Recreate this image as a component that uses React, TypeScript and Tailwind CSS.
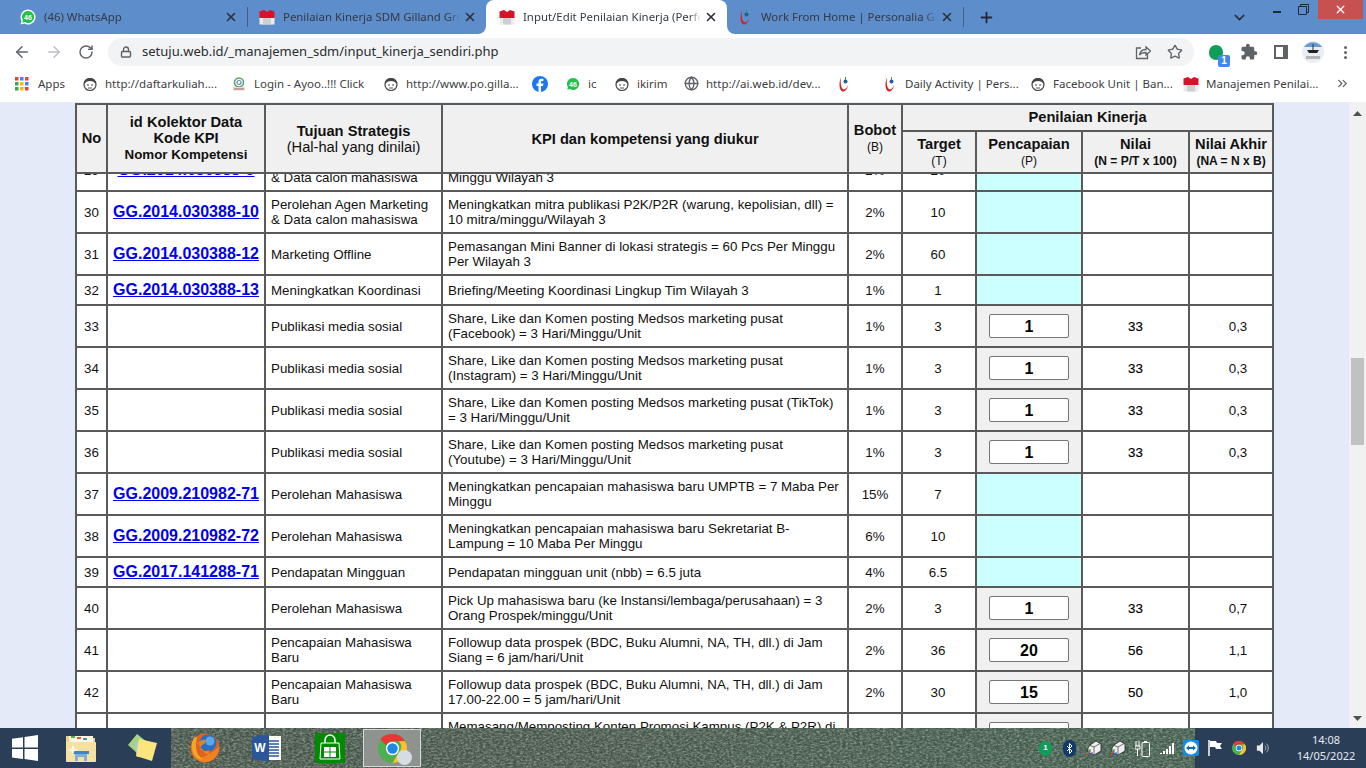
import React from "react";
import { ArrowLeft, ArrowRight, RotateCw, Lock, Star, X, Plus, ChevronDown, ChevronsRight, Globe } from "lucide-react";
import { MdExtension } from "react-icons/md";

const Flag = () => (
  <svg width="16" height="16" viewBox="0 0 16 16" className="shrink-0">
    <rect x="0.500" y="8" width="15" height="7.500" fill="#ececec" />
    <rect x="4" y="9" width="8" height="6.500" fill="#cfcfcf" />
    <path d="M0.500 2.500L5 1l3 2 3-2 4.500 1.500V9H0.500z" fill="#d8122a" />
  </svg>
);
const Wa = ({ s = 16 }: { s?: number }) => (
  <svg width={s} height={s} viewBox="0 0 16 16" className="shrink-0">
    <path d="M8 .500a7.500 7.500 0 0 0-6.400 11.300L.500 15.500l3.800-1A7.500 7.500 0 1 0 8 .500z" fill="#fff" />
    <path d="M8 2a6 6 0 0 0-5.100 9.200l-.6 2.500 2.500-.7A6 6 0 1 0 8 2z" fill="#25c04a" />
    <text x="8" y="10.500" textAnchor="middle" fontSize="7" fontWeight="700" fill="#fff" fontFamily="Liberation Sans, sans-serif">46</text>
  </svg>
);
const Swoosh = () => (
  <svg width="16" height="16" viewBox="0 0 16 16" className="shrink-0">
    <path d="M5 1.500C2.500 7 3 14 6.500 15.500c3 .5 5-3 5.500-6.500-1 3-3 4.800-4.500 4.300C5 12 4.200 7 5 1.500z" fill="#d2232a" />
    <circle cx="9.500" cy="5.500" r="2" fill="#1d5c96" />
    <path d="M9.500 1v3" stroke="#3a9a44" strokeWidth="1" />
  </svg>
);
const Face = () => (
  <svg width="16" height="16" viewBox="0 0 16 16" className="shrink-0">
    <circle cx="8" cy="8.500" r="6" fill="#fff" stroke="#444" strokeWidth="1.200" />
    <path d="M2 8c0-4 3-6 6-6s6 2 6 6c-2-2-3-3-6-3S4 6 2 8z" fill="#444" />
    <circle cx="6" cy="9" r=".8" fill="#333" />
    <circle cx="10" cy="9" r=".8" fill="#333" />
    <path d="M6 12h4" stroke="#555" />
  </svg>
);
const Fb = () => (
  <svg width="16" height="16" viewBox="0 0 16 16" className="shrink-0">
    <circle cx="8" cy="8" r="8" fill="#1877f2" />
    <path d="M9 16v-6h2l.4-2.400H9V6.200c0-.8.4-1.200 1.200-1.200h1.200V3s-1-.2-2-.2C7.500 2.800 6.500 4 6.500 6v1.600H4.500V10h2v6z" fill="#fff" />
  </svg>
);
const Login = () => (
  <svg width="16" height="16" viewBox="0 0 16 16" className="shrink-0">
    <circle cx="8" cy="6.500" r="4.500" fill="none" stroke="#5aa05a" strokeWidth="1.500" />
    <circle cx="8" cy="6.500" r="2" fill="none" stroke="#5a8fd0" strokeWidth="1.200" />
    <rect x="2" y="11" width="12" height="3.500" fill="#d8e4d8" />
    <path d="M3 13h10" stroke="#c05050" strokeWidth="1" />
  </svg>
);
const Grid = () => (
  <svg width="14" height="14" viewBox="0 0 14 14" className="shrink-0">
    {[0, 5, 10].flatMap((y, j) =>
      [0, 5, 10].map((x, i) => (
        <rect key={`${i}${j}`} x={x} y={y} width="3.500" height="3.500" fill={["#ea4335", "#4285f4", "#ea4335", "#34a853", "#fbbc05", "#4285f4", "#34a853", "#fbbc05", "#ea4335"][j * 3 + i]} />
      ))
    )}
  </svg>
);

const Tab = ({ icon, title, cls, active }: { icon: React.ReactNode; title: string; cls: string; active?: boolean }) => (
  <div className={`relative flex h-[34px] shrink-0 items-center gap-[8px] pr-[9px] ${cls} ${active ? "rounded-t-[8px] bg-white" : ""}`}>
    {active && (
      <>
        <svg width="8" height="8" viewBox="0 0 8 8" className="absolute bottom-0 left-[-8px]"><path d="M8 0v8H0a8 8 0 0 0 8-8z" fill="#fff" /></svg>
        <svg width="8" height="8" viewBox="0 0 8 8" className="absolute bottom-0 right-[-8px]"><path d="M0 0v8h8a8 8 0 0 1-8-8z" fill="#fff" /></svg>
      </>
    )}
    {icon}
    <span className="-mr-[5px] min-w-0 flex-1 overflow-hidden whitespace-nowrap text-[11.400px] text-[#333a44] [font-family:'Noto_Sans',sans-serif] [mask-image:linear-gradient(to_left,transparent,black_12px)]">{title}</span>
    <X size={14} strokeWidth={2.600} className="shrink-0 text-[#2b2f36]" />
  </div>
);

const Bm = ({ icon, label, w }: { icon: React.ReactNode; label?: string; w: string }) => (
  <div className={`flex shrink-0 items-center gap-[7px] ${w}`}>
    {icon}
    {label && <span className="whitespace-nowrap text-[11.500px] text-[#3c4043] [font-family:'Noto_Sans',sans-serif]">{label}</span>}
  </div>
);

type Row = { no: number; id?: string; t1: string; t2?: string; k1: string; k2?: string; b: string; tg: string; p?: string; n?: string; na?: string; h: string };
const rows: Row[] = [
  { no: 29, id: "GG.2014.030388-9", t1: "Perolehan Agen Marketing", t2: "& Data calon mahasiswa", k1: "Meningkatkan mitra publikasi mahasiswa = 20 mitra per", k2: "Minggu Wilayah 3", b: "2%", tg: "20", h: "h-[42px]" },
  { no: 30, id: "GG.2014.030388-10", t1: "Perolehan Agen Marketing", t2: "& Data calon mahasiswa", k1: "Meningkatkan mitra publikasi P2K/P2R (warung, kepolisian, dll) =", k2: "10 mitra/minggu/Wilayah 3", b: "2%", tg: "10", h: "h-[42px]" },
  { no: 31, id: "GG.2014.030388-12", t1: "Marketing Offline", k1: "Pemasangan Mini Banner di lokasi strategis = 60 Pcs Per Minggu", k2: "Per Wilayah 3", b: "2%", tg: "60", h: "h-[42px]" },
  { no: 32, id: "GG.2014.030388-13", t1: "Meningkatkan Koordinasi", k1: "Briefing/Meeting Koordinasi Lingkup Tim Wilayah 3", b: "1%", tg: "1", h: "h-[30px]" },
  { no: 33, t1: "Publikasi media sosial", k1: "Share, Like dan Komen posting Medsos marketing pusat", k2: "(Facebook) = 3 Hari/Minggu/Unit", b: "1%", tg: "3", p: "1", n: "33", na: "0,3", h: "h-[42px]" },
  { no: 34, t1: "Publikasi media sosial", k1: "Share, Like dan Komen posting Medsos marketing pusat", k2: "(Instagram) = 3 Hari/Minggu/Unit", b: "1%", tg: "3", p: "1", n: "33", na: "0,3", h: "h-[42px]" },
  { no: 35, t1: "Publikasi media sosial", k1: "Share, Like dan Komen posting Medsos marketing pusat (TikTok)", k2: "= 3 Hari/Minggu/Unit", b: "1%", tg: "3", p: "1", n: "33", na: "0,3", h: "h-[42px]" },
  { no: 36, t1: "Publikasi media sosial", k1: "Share, Like dan Komen posting Medsos marketing pusat", k2: "(Youtube) = 3 Hari/Minggu/Unit", b: "1%", tg: "3", p: "1", n: "33", na: "0,3", h: "h-[42px]" },
  { no: 37, id: "GG.2009.210982-71", t1: "Perolehan Mahasiswa", k1: "Meningkatkan pencapaian mahasiswa baru UMPTB = 7 Maba Per", k2: "Minggu", b: "15%", tg: "7", h: "h-[42px]" },
  { no: 38, id: "GG.2009.210982-72", t1: "Perolehan Mahasiswa", k1: "Meningkatkan pencapaian mahasiswa baru Sekretariat B-", k2: "Lampung = 10 Maba Per Minggu", b: "6%", tg: "10", h: "h-[42px]" },
  { no: 39, id: "GG.2017.141288-71", t1: "Pendapatan Mingguan", k1: "Pendapatan mingguan unit (nbb) = 6.5 juta", b: "4%", tg: "6.5", h: "h-[30px]" },
  { no: 40, t1: "Perolehan Mahasiswa", k1: "Pick Up mahasiswa baru (ke Instansi/lembaga/perusahaan) = 3", k2: "Orang Prospek/minggu/Unit", b: "2%", tg: "3", p: "1", n: "33", na: "0,7", h: "h-[42px]" },
  { no: 41, t1: "Pencapaian Mahasiswa", t2: "Baru", k1: "Followup data prospek (BDC, Buku Alumni, NA, TH, dll.) di Jam", k2: "Siang = 6 jam/hari/Unit", b: "2%", tg: "36", p: "20", n: "56", na: "1,1", h: "h-[42px]" },
  { no: 42, t1: "Pencapaian Mahasiswa", t2: "Baru", k1: "Followup data prospek (BDC, Buku Alumni, NA, TH, dll.) di Jam", k2: "17.00-22.00 = 5 jam/hari/Unit", b: "2%", tg: "30", p: "15", n: "50", na: "1,0", h: "h-[42px]" },
  { no: 43, t1: "Publikasi media sosial", k1: "Memasang/Memposting Konten Promosi Kampus (P2K & P2R) di", k2: "Media Sosial = 3 Konten/hari", b: "2%", tg: "21", p: "8", n: "38", na: "0,8", h: "h-[42px]" },
];

const bd = "border-2 border-[#5a5a5a]";
const Cols = () => (
  <colgroup>
    <col className="w-[31px]" />
    <col className="w-[158px]" />
    <col className="w-[177px]" />
    <col className="w-[406px]" />
    <col className="w-[54px]" />
    <col className="w-[74px]" />
    <col className="w-[106px]" />
    <col className="w-[107px]" />
    <col className="w-[84px]" />
  </colgroup>
);
const th = `${bd} bg-[#f0f0f0] p-0 text-center align-middle font-bold text-[14.670px] leading-[16px] text-[#111]`;

const Header = () => (
  <table className="w-[1198px] shrink-0 table-fixed border-collapse [font-family:'Liberation_Sans',sans-serif]">
    <Cols />
    <thead>
      <tr className="h-[27px]">
        <th rowSpan={2} className={`${th} pb-[2px]`}>No</th>
        <th rowSpan={2} className={th}>
          id Kolektor Data<br />Kode KPI<br /><span className="text-[13.330px]">Nomor Kompetensi</span>
        </th>
        <th rowSpan={2} className={th}>
          Tujuan Strategis<br /><span className="font-normal">(Hal-hal yang dinilai)</span>
        </th>
        <th rowSpan={2} className={th}>KPI dan kompetensi yang diukur</th>
        <th rowSpan={2} className={th}>
          Bobot<br /><span className="text-[12px] font-normal">(B)</span>
        </th>
        <th colSpan={4} className={`${th} pb-[2px]`}>Penilaian Kinerja</th>
      </tr>
      <tr className="h-[42px]">
        <th className={th}>Target<br /><span className="text-[12px] font-normal">(T)</span></th>
        <th className={th}>Pencapaian<br /><span className="text-[12px] font-normal">(P)</span></th>
        <th className={th}>Nilai<br /><span className="text-[12px]">(N = P/T x 100)</span></th>
        <th className={th}>Nilai Akhir<br /><span className="text-[12px]">(NA = N x B)</span></th>
      </tr>
    </thead>
  </table>
);

const Body = () => (
  <div className="min-h-0 flex-1 overflow-hidden">
    <table className="-mt-[26px] w-[1198px] table-fixed border-collapse bg-white text-[13.330px] leading-[15px] text-[#111] [font-family:'Liberation_Sans',sans-serif]">
      <Cols />
      <tbody>
        {rows.map((r) => (
          <tr key={r.no} className={r.h}>
            <td className={`${bd} p-0 text-center`}>{r.no}</td>
            <td className={`${bd} p-0 text-center`}>
              {r.id && <a className="text-[16px] font-bold text-[#0000ee] underline">{r.id}</a>}
            </td>
            <td className={`${bd} py-0 pl-[5px] pr-0`}>{r.t1}{r.t2 && <><br />{r.t2}</>}</td>
            <td className={`${bd} py-0 pl-[5px] pr-0`}>{r.k1}{r.k2 && <><br />{r.k2}</>}</td>
            <td className={`${bd} p-0 text-center`}>{r.b}</td>
            <td className={`${bd} p-0 pr-[2px] text-center`}>{r.tg}</td>
            <td className={`${bd} p-0 ${r.p ? "bg-[#f0f0f0]" : "bg-[#ccffff]"}`}>
              {r.p && (
                <div className="mx-auto flex h-[24px] w-[80px] items-center justify-center rounded-[2px] border border-[#767676] bg-white text-[16px] font-bold text-black">{r.p}</div>
              )}
            </td>
            <td className={`${bd} p-0 text-center text-black [-webkit-text-stroke:0.15px_black]`}>{r.n}</td>
            <td className={`${bd} p-0 pl-[14px] text-center`}>{r.na}</td>
          </tr>
        ))}
      </tbody>
    </table>
  </div>
);

const Grass = () => (
  <svg className="absolute inset-0 h-full w-full" preserveAspectRatio="none">
    <defs>
      <filter id="grassD" x="0" y="0" width="100%" height="100%">
        <feTurbulence type="fractalNoise" baseFrequency="0.3 0.5" numOctaves="3" seed="4" />
        <feColorMatrix values="0 0 0 0 0.14  0 0 0 0 0.2  0 0 0 0 0.16  2.200 0 0 0 -0.800" />
      </filter>
      <filter id="grassL" x="0" y="0" width="100%" height="100%">
        <feTurbulence type="fractalNoise" baseFrequency="0.35 0.6" numOctaves="2" seed="11" />
        <feColorMatrix values="0 0 0 0 0.45  0 0 0 0 0.52  0 0 0 0 0.46  0 1.400 0 0 -0.620" />
      </filter>
      <linearGradient id="grassBase" x1="0" x2="1" y1="0" y2="0">
        <stop offset="0" stopColor="#434e45" />
        <stop offset="0.45" stopColor="#465248" />
        <stop offset="0.8" stopColor="#3f5a49" />
        <stop offset="1" stopColor="#3f5a49" />
      </linearGradient>
    </defs>
    <rect width="100%" height="100%" fill="url(#grassBase)" />
    <rect width="100%" height="100%" filter="url(#grassD)" />
    <rect width="100%" height="100%" filter="url(#grassL)" />
  </svg>
);

const Win = () => (
  <svg width="26" height="26" viewBox="0 0 26 26">
    <path d="M0 3.800l11-1.600V12.500H0zM12.500 2L26 0v12.500H12.500zM0 14h11v10L0 22.400zM12.500 14H26v12l-13.500-2z" fill="#fff" />
  </svg>
);
const Folder = () => (
  <svg width="32" height="30" viewBox="0 0 32 30">
    <path d="M1 3h10l2 2h17v10H1z" fill="#e9d28c" />
    <rect x="4" y="3" width="24" height="8" fill="#fbf6dc" />
    <rect x="6" y="3" width="4" height="2" fill="#4caf50" />
    <rect x="12" y="4" width="4" height="2" fill="#d9534f" />
    <rect x="18" y="5" width="4" height="2" fill="#3f8fd6" />
    <rect x="1" y="9" width="30" height="20" rx="1" fill="#f5e1a0" />
    <path d="M10 28v-7h12v7h-3v-4h-6v4z" fill="#7fb0dc" />
    <rect x="8" y="18" width="16" height="3" fill="#3f86c4" />
    <path d="M8 11l1.500 5 4 1-4 1-1.500 4-1.500-4-4-1 4-1z" fill="#ffffff" fillOpacity=".8" />
  </svg>
);
const Notes = () => (
  <svg width="32" height="30" viewBox="0 0 32 30">
    <path d="M1 12L10 1l10 8-10 11z" fill="#a4d484" />
    <path d="M8 10h12v14H10z" fill="#a9c8ea" />
    <path d="M12 6l18 4-5 18-16-5z" fill="#fbe57d" />
  </svg>
);
const Fox = () => (
  <svg width="30" height="30" viewBox="0 0 30 30">
    <circle cx="15" cy="15" r="14.500" fill="#e2611c" />
    <circle cx="18" cy="10" r="8.500" fill="#2a6fbf" />
    <circle cx="20" cy="8" r="4.500" fill="#5fa7e4" />
    <path d="M29 13c.6 8-5.500 16-14 16C9 29 3 25 1.500 18 3 22 8 25 13 24c6-1 6-6 6-7-2 1.500-6 1.500-8 0-1.500-2 0-5 3-6 1-.5 2-2 1.500-4C12 6 9 8 8 11 6.500 10 6 7 7 4 3 7 4 5 5 3c3 8 7 15 11 18 4 0 10-3 13-8z" fill="#f08a24" fillOpacity=".85" />
    <path d="M3 7c-2 4-2 9 0 13 2 3 5 6 10 7-5-4-7-9-7-14 0-3 0-6 1-9-2 0-3 1-4 3z" fill="#f6c02c" fillOpacity=".75" />
  </svg>
);
const Word = () => (
  <svg width="30" height="30" viewBox="0 0 30 30">
    <rect x="13" y="3" width="16" height="24" fill="#fff" />
    <path d="M17 8h10M17 11h10M17 14h10M17 17h10M17 20h10M17 23h10" stroke="#2b579a" strokeWidth="1.500" />
    <path d="M0 4l17-3v28L0 26z" fill="#2b579a" />
    <text x="8" y="19" textAnchor="middle" fontSize="12" fontWeight="700" fill="#fff" fontFamily="Liberation Sans, sans-serif">W</text>
  </svg>
);
const Store = () => (
  <svg width="30" height="30" viewBox="0 0 30 30">
    <rect width="30" height="30" fill="#008a00" />
    <path d="M10 10V7a5 5 0 0 1 10 0v3" fill="none" stroke="#fff" strokeWidth="1.500" />
    <path d="M6 10h18l1 16H5z" fill="none" stroke="#fff" strokeWidth="1" />
    <path d="M9 14h5.500v4.500H9zM15.500 14H21v4.500h-5.500zM9 19.500h5.500V24H9zM15.500 19.500H21V24h-5.500z" fill="#fff" />
  </svg>
);
const ChromeIcon = ({ s = 24 }: { s?: number }) => (
  <svg width={s} height={s} viewBox="0 0 24 24" className="shrink-0">
    <circle cx="12" cy="12" r="12" fill="#4caf50" />
    <path d="M12 0a12 12 0 0 1 10.400 6H12a6 6 0 0 0-5.400 3.300L2 4.300A12 12 0 0 1 12 0z" fill="#e53935" />
    <path d="M22.400 6A12 12 0 0 1 12 24l5.200-9a6 6 0 0 0 0-9z" fill="#fbc02d" />
    <circle cx="12" cy="12" r="5.500" fill="#fff" />
    <circle cx="12" cy="12" r="4.300" fill="#1e88e5" />
  </svg>
);

const Printer = () => (
  <svg width="16" height="17" viewBox="0 0 16 17" className="shrink-0">
    <path d="M4 5l6-4 5 3v7l-7 4-6-3V8z" fill="#eeeeee" stroke="#222" strokeWidth=".8" />
    <path d="M8 7l6-3.500M8 7v7M8 7L3 5" stroke="#333" strokeWidth=".7" fill="none" />
    <path d="M0 15l4-5 1 1-4 5z" fill="#e33" />
    <path d="M2 16l4-4 1 1-4 3z" fill="#2b5be8" />
    <path d="M1 13l3-4 1 .5-3 4z" fill="#2da84a" />
  </svg>
);

const Taskbar = () => (
  <div className="relative flex h-[40px] shrink-0 items-stretch overflow-hidden">
    <Grass />
    <div className="relative flex w-[171px] shrink-0 items-center bg-[#2a3e58]">
      <div className="ml-[12px] flex"><Win /></div>
      <div className="ml-[27px] flex"><Folder /></div>
      <div className="ml-[30px] flex"><Notes /></div>
    </div>
    <div className="relative flex items-center">
      <div className="ml-[19px] flex"><Fox /></div>
      <div className="ml-[32px] flex"><Word /></div>
      <div className="ml-[33px] flex"><Store /></div>
      <div className="ml-[18px] flex h-[38px] w-[58px] items-center justify-center border border-[#d8d8d8] bg-[#8f938f]">
        <div className="relative flex"><ChromeIcon s={29} />
          <span className="absolute bottom-[-2px] right-[-5px] h-[15px] w-[15px] rounded-full bg-[#d5dde2]" />
        </div>
      </div>
    </div>
    <div className="relative z-10 ml-auto mr-[-4px] flex items-center">
      <div className="flex h-[15px] w-[13px] items-center justify-center rounded-full bg-[#0f9d58] text-[8px] font-bold text-white [font-family:'Liberation_Sans',sans-serif]">1</div>
      <div className="ml-[11px] flex h-[17px] w-[13px] items-center justify-center rounded-full bg-[#123a6b]">
        <svg width="7" height="11" viewBox="0 0 7 11"><path d="M1 3l5 5-2.500 2.500V.500L6 3 1 8" fill="none" stroke="#fff" strokeWidth="1" /></svg>
      </div>
      <div className="ml-[10px] flex"><Printer /></div>
      <div className="ml-[8px] flex"><Printer /></div>
      <svg width="15" height="17" viewBox="0 0 15 17" className="ml-[9px] shrink-0"><rect x="7" y="2.500" width="7.500" height="14" rx="1" fill="none" stroke="#fff" /><rect x="9" y="1" width="3" height="1.500" fill="#fff" /><path d="M1 1v5M4 1v5M0 6h5v3H0zM2.500 9v7" stroke="#fff" strokeWidth="1" fill="none" /></svg>
      <svg width="16" height="13" viewBox="0 0 16 13" className="ml-[9px] shrink-0"><path d="M1 11h2v1H1zM4 9h2v3H4zM7 7h2v5H7zM10 4h2v8h-2zM13 1h2v11h-2z" fill="#fff" /></svg>
      <div className="ml-[8px] flex h-[16px] w-[16px] items-center justify-center rounded-[2px] bg-[#0e8ee9]">
        <svg width="14" height="14" viewBox="0 0 14 14"><circle cx="7" cy="7" r="6.500" fill="#fff" /><path d="M2 7l3-2.500v1.500h4V4.500L12 7 9 9.500V8H5v1.500z" fill="#0e6cc0" /></svg>
      </div>
    </div>
    <div className="relative flex w-[171px] shrink-0 items-center bg-[#2a3e58] pl-[13px]">
      <svg width="14" height="16" viewBox="0 0 14 16" className="shrink-0"><path d="M1 0v16" stroke="#fff" strokeWidth="1.500" /><path d="M2 1h6l1 2h5l-2 3 2 3H8L7 7H2z" fill="#fff" /></svg>
      <div className="ml-[10px] flex"><ChromeIcon s={14} /></div>
      <svg width="14" height="16" viewBox="0 0 16 16" className="ml-[10px] shrink-0"><path d="M1 5h3l4-4v14l-4-4H1z" fill="#e8e8e8" /><path d="M10 5a4 4 0 0 1 0 6M12 3a7 7 0 0 1 0 10" fill="none" stroke="#bbb" /></svg>
      <div className="ml-[21px] flex w-[70px] flex-col items-center text-[11px] leading-[16px] text-[#e6e9ee] [font-family:'Noto_Sans',sans-serif]">
        <span>14:08</span>
        <span>14/05/2022</span>
      </div>
    </div>
  </div>
);

export default function App() {
  return (
    <div className="flex h-[768px] w-[1366px] flex-col overflow-hidden bg-white">
      {/* tabs */}
      <div className="flex h-[34px] shrink-0 items-center bg-[#5e8dcb]">
        <Tab cls="ml-[8px] w-[239px] pl-[12px]" icon={<Wa />} title="(46) WhatsApp" />
        <div className="h-[20px] w-px shrink-0 bg-[#3f5f8a]" />
        <Tab cls="w-[238px] pl-[11px]" icon={<Flag />} title="Penilaian Kinerja SDM Gilland Gro" />
        <Tab cls="w-[241px] pl-[13px]" active icon={<Flag />} title="Input/Edit Penilaian Kinerja (Perfo" />
        <Tab cls="w-[236px] pl-[10px]" icon={<Swoosh />} title="Work From Home | Personalia Gil" />
        <div className="h-[20px] w-px shrink-0 bg-[#3f5f8a]" />
        <Plus size={17} strokeWidth={2.500} className="ml-[14px] shrink-0 text-[#1f2937]" />
        <ChevronDown size={17} strokeWidth={2.200} className="ml-[236px] shrink-0 text-[#26303f]" />
        <div className="mb-[10px] ml-[25px] h-[2px] w-[8px] shrink-0 bg-[#1f2937]" />
        <svg width="11" height="11" viewBox="0 0 11 11" className="mb-[15px] ml-[17px] shrink-0">
          <path d="M2.500 2.500V.500h8v8h-2M.500 2.500h8v8h-8z" fill="none" stroke="#1f2937" />
        </svg>
        <div className="mb-[15px] ml-[9px] flex h-[19px] w-[45px] shrink-0 items-center justify-center bg-[#c75050]">
          <X size={13} strokeWidth={2.500} className="text-white" />
        </div>
      </div>
      {/* toolbar */}
      <div className="flex h-[33px] shrink-0 items-center bg-white pt-[3px]">
        <ArrowLeft size={18} strokeWidth={2} className="ml-[13px] shrink-0 text-[#5f6368]" />
        <ArrowRight size={18} strokeWidth={2} className="ml-[14px] shrink-0 text-[#bcbfc3]" />
        <RotateCw size={16} strokeWidth={2.200} className="ml-[15px] shrink-0 text-[#5f6368]" />
        <div className="ml-[14px] flex h-[28px] w-[1086px] shrink-0 items-center rounded-full bg-[#f1f3f4] pl-[12px] pr-[10px]">
          <Lock size={12} strokeWidth={2.800} className="shrink-0 text-[#5f6368]" />
          <span className="ml-[10px] text-[13px] text-[#2a2d31] [font-family:'Noto_Sans',sans-serif]">setuju.web.id/_manajemen_sdm/input_kinerja_sendiri.php</span>
          <svg width="16" height="16" viewBox="0 0 16 16" className="ml-auto shrink-0" fill="none" stroke="#5f6368" strokeWidth="1.300">
            <path d="M6 4H1.500v10.500h11V10" />
            <path d="M4.500 11c.5-3.500 3-5.500 6.500-5.500V3l4.500 4-4.500 4V8.500c-2.500 0-5 .5-6.500 2.500z" />
          </svg>
          <Star size={16} strokeWidth={2} className="ml-[16px] mr-[1px] shrink-0 text-[#5f6368]" />
        </div>
        <div className="relative ml-[15px] h-[15px] w-[14px] shrink-0 rounded-full bg-[#0f9d58]">
          <span className="absolute left-[9px] top-[10px] flex h-[12px] w-[12px] items-center justify-center rounded-[2px] bg-[#4285f4] text-[10px] font-bold text-white [font-family:'Liberation_Sans',sans-serif]">1</span>
        </div>
        <MdExtension size={18} className="ml-[17px] shrink-0 text-[#5f6368]" />
        <div className="ml-[16px] flex h-[14px] w-[14px] shrink-0 justify-end border-2 border-[#5f6368]"><div className="h-full w-[3px] bg-[#5f6368]" /></div>
        <svg width="22" height="22" viewBox="0 0 22 22" className="ml-[14px] shrink-0">
          <circle cx="11" cy="11" r="11" fill="#e8eef4" />
          <path d="M2 6a11 11 0 0 1 18 0z" fill="#6a9cd0" />
          <path d="M5 9h12l-2 3H7z" fill="#222" />
          <path d="M11 3v6" stroke="#333" />
          <rect x="4" y="15" width="14" height="3" fill="#b5b5b5" />
        </svg>
        <div className="ml-[20px] flex shrink-0 flex-col gap-[2px]">
          <span className="h-[3px] w-[3px] rounded-full bg-[#5f6368]" />
          <span className="h-[3px] w-[3px] rounded-full bg-[#5f6368]" />
          <span className="h-[3px] w-[3px] rounded-full bg-[#5f6368]" />
        </div>
      </div>
      {/* bookmarks */}
      <div className="flex h-[35px] shrink-0 items-center bg-white pl-[15px] pb-[2px]">
        <Bm w="w-[67px] gap-[9px]" icon={<Grid />} label="Apps" />
        <Bm w="w-[149px]" icon={<Face />} label="http://daftarkuliah...." />
        <Bm w="w-[152px]" icon={<Login />} label="Login - Ayoo..!!! Click" />
        <Bm w="w-[149px]" icon={<Face />} label="http://www.po.gilla..." />
        <Bm w="w-[33px]" icon={<Fb />} />
        <Bm w="w-[49px]" icon={<Wa />} label="ic" />
        <Bm w="w-[70px]" icon={<Face />} label="ikirim" />
        <Bm w="w-[152px]" icon={<Globe size={15} strokeWidth={2.200} className="text-[#5f6368]" />} label="http://ai.web.id/dev..." />
        <Bm w="w-[46px]" icon={<Swoosh />} />
        <Bm w="w-[148px] gap-[6px]" icon={<Swoosh />} label="Daily Activity | Pers..." />
        <Bm w="w-[153px]" icon={<Face />} label="Facebook Unit | Ban..." />
        <Bm w="w-[152px]" icon={<Flag />} label="Manajemen Penilai..." />
        <ChevronsRight size={15} strokeWidth={2} className="shrink-0 text-[#5f6368]" />
      </div>
      {/* page */}
      <div className="flex min-h-0 flex-1 bg-[#e4eaf7]">
        <div className="flex min-w-0 flex-1 flex-col pl-[75px] pt-[1px]">
          <Header />
          <Body />
        </div>
        <div className="flex w-[17px] shrink-0 flex-col items-center bg-[#f1f1f1] pb-[7px] pt-[9px]">
          <svg width="9" height="5" viewBox="0 0 9 5" className="shrink-0"><path d="M4.500 0L9 5H0z" fill="#505050" /></svg>
          <div className="mt-[242px] h-[87px] w-[13px] shrink-0 bg-[#c1c1c1]" />
          <svg width="9" height="5" viewBox="0 0 9 5" className="mt-auto shrink-0"><path d="M4.500 5L9 0H0z" fill="#505050" /></svg>
        </div>
      </div>
      <Taskbar />
    </div>
  );
}
